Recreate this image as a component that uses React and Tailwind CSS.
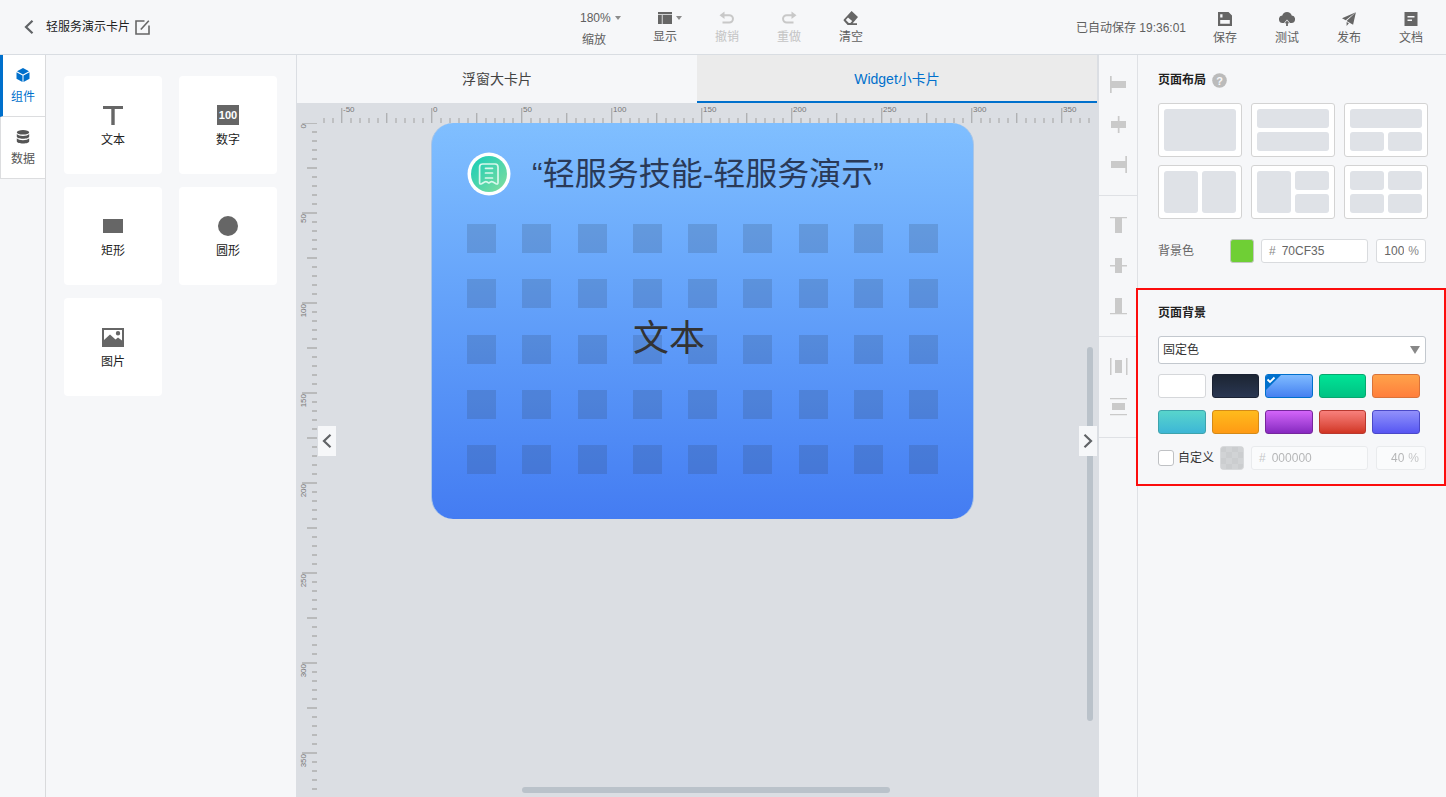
import React, { useEffect, useRef, useState } from "react";

const STEP = 9;

function useSize() {
  const ref = useRef(null);
  const [size, setSize] = useState({ width: 0, height: 0 });
  useEffect(() => {
    const update = () => {
      const r = ref.current.getBoundingClientRect();
      setSize({ width: r.width, height: r.height });
    };
    update();
    window.addEventListener("resize", update);
    return () => window.removeEventListener("resize", update);
  }, []);
  return [ref, size];
}

function TopRuler() {
  const [ref, { width }] = useSize();
  const origin = 134;
  const ticks = [];
  for (let i = -12; origin + i * STEP < width - 2; i++) {
    ticks.push(i);
  }
  return (
    <div ref={ref} className="h-5 w-full shrink-0">
      <svg className="block h-full w-full" aria-hidden="true">
        {ticks.map((i) => {
          const x = origin + i * STEP;
          const major = i % 10 === 0;
          const mid = i % 5 === 0;
          const h = major ? 15 : mid ? 10 : 5;
          return (
            <g key={i}>
              <rect x={x} y={20 - h} width={mid ? 1.4 : 2} height={h} fill={mid ? "#b0b1b3" : "#bfc0c2"} />
              {major && x < width - 20 && (
                <text x={x + 2} y="9" fontSize="8" fill="#777" fontFamily="Liberation Sans, Arial, sans-serif">
                  {i * 5}
                </text>
              )}
            </g>
          );
        })}
      </svg>
    </div>
  );
}

function SideRuler() {
  const [ref, { height }] = useSize();
  const ticks = [];
  for (let i = 0; i * STEP < height - 2; i++) {
    ticks.push(i);
  }
  return (
    <div ref={ref} className="w-5 shrink-0">
      <svg className="block h-full w-full" aria-hidden="true">
        {ticks.map((i) => {
          const y = i * STEP;
          const major = i % 10 === 0;
          const w = major ? 15 : i % 5 === 0 ? 10 : 5;
          return (
            <g key={i}>
              <rect x={20 - w} y={y - 1} width={w} height="2" fill="#b9babb" />
              {major && y < height - 16 && (
                <text
                  transform={`translate(9 ${y + 1}) rotate(-90)`}
                  textAnchor="end"
                  fontSize="8"
                  fill="#777"
                  fontFamily="Liberation Sans, Arial, sans-serif"
                >
                  {i * 5}
                </text>
              )}
            </g>
          );
        })}
      </svg>
    </div>
  );
}

function Chevron({ flip }) {
  return (
    <svg width="10" height="16" viewBox="0 0 10 16" fill="none" stroke="#606366" strokeWidth="2.2">
      {flip ? <path d="M1.5 1.8 8 8l-6.500 6.200" /> : <path d="M8.500 1.800 2 8l6.500 6.200" />}
    </svg>
  );
}

const Caret = () => (
  <svg width="6" height="4" viewBox="0 0 6 4" fill="#8c8c8c">
    <path d="M0 0h6L3 4z" />
  </svg>
);

const icons = {
  display: (
    <svg width="14" height="14" viewBox="0 0 14 14" fill="#666">
      <path d="M0 1h14v2.200H0zM0 4h3.800v9H0zM4.600 4H14v9H4.600z" />
    </svg>
  ),
  undo: (
    <svg width="16" height="14" viewBox="0 0 16 14">
      <path d="M4 4.200h6.300a3.600 3.600 0 0 1 0 7.300H3.500" fill="none" stroke="#c8c8c8" strokeWidth="2" />
      <path d="M0.500 4.200 5.500 0.500v7.400z" fill="#c8c8c8" />
    </svg>
  ),
  redo: (
    <svg width="16" height="14" viewBox="0 0 16 14">
      <path d="M12 4.200H5.700a3.600 3.600 0 0 0 0 7.300h6.800" fill="none" stroke="#c8c8c8" strokeWidth="2" />
      <path d="M15.500 4.200 10.500 0.500v7.400z" fill="#c8c8c8" />
    </svg>
  ),
  clear: (
    <svg width="16" height="16" viewBox="0 0 16 16" fill="#666">
      <path
        fillRule="evenodd"
        d="M8.600 1.100 15 7 9.700 13.200H14V15H4.600L.800 10.800a1 1 0 0 1 0-1.300zM5 7.400 2.800 10l3 3.100h1.600L9.200 11z"
      />
    </svg>
  ),
  save: (
    <svg width="14" height="14" viewBox="0 0 14 14" fill="#666">
      <path fillRule="evenodd" d="M0 0h10.500L14 3.500V14H0zM2.200 2.200v3.200h2.300V2.200zM2.200 8v3.800h9.600V8z" />
    </svg>
  ),
  test: (
    <svg width="16" height="14" viewBox="0 0 16 14" fill="#666">
      <path d="M8 0a5 5 0 0 1 4.700 3.600A3.700 3.700 0 0 1 12 11h-1L8 7.400 5 11H4a3.700 3.700 0 0 1-.700-7.400A5 5 0 0 1 8 0z" />
      <path d="M8 8.500 10.300 11.300H8.900V14H7.100v-2.700H5.700z" />
    </svg>
  ),
  publish: (
    <svg width="14" height="14" viewBox="0 0 14 14" fill="#666">
      <path d="M13.800.200 0 6.200l3.700 2zM13.900.300 4.600 9l6.500 3.700zM4.600 10V14l2.300-2.700z" />
    </svg>
  ),
  docs: (
    <svg width="14" height="14" viewBox="0 0 14 14" fill="#666">
      <path fillRule="evenodd" d="M.500 0h13v14H.500zM3.500 4v1.600h7V4zM3.500 7.500v1.600h4.500V7.500z" />
    </svg>
  ),
};

function Tool({ icon, label, disabled, caret }) {
  return (
    <button
      type="button"
      disabled={disabled}
      className={`relative flex w-[62px] flex-col items-center ${disabled ? "text-[#c4c4c4]" : "text-[#606060]"}`}
    >
      <span className="flex h-4 items-center">{icons[icon]}</span>
      <span className="mt-[3px] leading-4">{label}</span>
      {caret && (
        <span className="absolute top-1.5 right-3.5 flex h-1">
          <Caret />
        </span>
      )}
    </button>
  );
}

function Header() {
  return (
    <header className="grid h-[55px] shrink-0 grid-cols-[1fr_auto_1fr] items-center border-b border-[#d9dde2]">
      <div className="flex items-center pl-6">
        <button type="button" aria-label="返回">
          <Chevron />
        </button>
        <h1 className="ml-3 text-[12px] leading-4 text-[#222]">轻服务演示卡片</h1>
        <button type="button" aria-label="编辑名称" className="ml-[5px]">
          <svg width="15" height="15" viewBox="0 0 15 15" fill="none" stroke="#666" strokeWidth="1.600">
            <path d="M9.500 1H1v13h13V5.500M5.800 9.500l8-8.700" />
          </svg>
        </button>
      </div>
      <div className="flex items-start pt-[3px]">
        <button type="button" className="flex w-[70px] flex-col items-start pl-4 text-[#606060]">
          <span className="flex items-center gap-1 leading-4">
            180%
            <Caret />
          </span>
          <span className="mt-1.5 pl-0.5 leading-4">缩放</span>
        </button>
        <Tool icon="display" label="显示" caret />
        <Tool icon="undo" label="撤销" disabled />
        <Tool icon="redo" label="重做" disabled />
        <Tool icon="clear" label="清空" />
      </div>
      <div className="flex items-center justify-end pt-0.5 pr-1">
        <span className="mr-2 text-[#606060]">已自动保存 19:36:01</span>
        <Tool icon="save" label="保存" />
        <Tool icon="test" label="测试" />
        <Tool icon="publish" label="发布" />
        <Tool icon="docs" label="文档" />
      </div>
    </header>
  );
}

function Rail() {
  return (
    <nav className="w-[46px] shrink-0 border-r border-[#d9dadc]">
      <button
        type="button"
        className="flex h-[62px] w-full flex-col items-center border-b border-l-[3px] border-b-[#dcdddf] border-l-[#0070cc] bg-white pt-3 pr-0.5 text-[#0070cc]"
      >
        <svg width="14" height="16" viewBox="0 0 14 16" fill="#0070cc">
          <path d="M7 1 13 4.200 7 7.400 1 4.200zM.500 5.200l6 3.200V15l-6-3.300zM13.500 5.200l-6 3.200V15l6-3.300z" />
        </svg>
        <span className="mt-1.5 leading-4">组件</span>
      </button>
      <button
        type="button"
        className="flex h-[62px] w-full flex-col items-center border-b border-l border-[#dcdddf] bg-white pt-3 text-[#555]"
      >
        <svg width="14" height="16" viewBox="0 0 14 16" fill="#555">
          <ellipse cx="7" cy="3.300" rx="6.200" ry="2.300" />
          <path d="M.800 5c1 1.300 3.400 1.900 6.200 1.900s5.200-.600 6.200-1.900v2.500c0 1.300-2.800 2.300-6.200 2.300S.800 8.800.800 7.500zM.800 9.300c1 1.300 3.400 1.900 6.200 1.900s5.200-.600 6.200-1.900v2.900c0 1.300-2.800 2.300-6.200 2.300s-6.200-1-6.200-2.300z" />
        </svg>
        <span className="mt-1.5 leading-4">数据</span>
      </button>
    </nav>
  );
}

const parts = [
  {
    label: "文本",
    icon: <path d="M1 2h20v3H12.700v16H9.300V5H1z" />,
  },
  {
    label: "数字",
    icon: (
      <>
        <path d="M0 1h22v20H0z" />
        <text
          x="11"
          y="15"
          textAnchor="middle"
          fontSize="11"
          fontWeight="700"
          fill="#fff"
          fontFamily="Liberation Sans, sans-serif"
        >
          100
        </text>
      </>
    ),
  },
  { label: "矩形", icon: <path d="M1 4h20v14H1z" /> },
  { label: "圆形", icon: <circle cx="11" cy="11" r="10" /> },
  {
    label: "图片",
    icon: (
      <path
        fillRule="evenodd"
        d="M0 2h22v19H0zM2 4v10l6-5.500 5.500 5L16 11.500l4 3V4zM16 5a2.200 2.200 0 1 1 0 4.400A2.200 2.200 0 0 1 16 5z"
      />
    ),
  },
];

function Palette() {
  return (
    <section aria-label="组件" className="w-[251px] shrink-0 border-r border-[#dbdee3] pt-[21px] pr-[19px] pl-[18px]">
      <div className="grid grid-cols-2 gap-x-[17px] gap-y-[13px]">
        {parts.map((p) => (
          <button
            key={p.label}
            type="button"
            className="flex h-[98px] flex-col items-center justify-center rounded bg-white text-[#222]"
          >
            <svg width="22" height="22" viewBox="0 0 22 22" fill="#666" className="mt-0.5">
              {p.icon}
            </svg>
            <span className="mt-1.5 leading-4">{p.label}</span>
          </button>
        ))}
      </div>
    </section>
  );
}

function Card() {
  return (
    <article className="absolute top-0 left-[114px] h-[396px] w-[543px] rounded-[22px] border-x border-[#a9c5e6] bg-linear-to-b from-[#80bfff] to-[#447cf2] bg-origin-border">
      <div className="flex h-[101px] items-center pl-[35px]">
        <svg width="44" height="44" viewBox="0 0 44 44">
          <defs>
            <linearGradient id="badge" x1="0" y1="0" x2="1" y2="1">
              <stop offset=".1" stopColor="#1fceb6" />
              <stop offset=".9" stopColor="#79dca0" />
            </linearGradient>
          </defs>
          <circle cx="22" cy="22" r="21.500" fill="#fff" />
          <circle cx="22" cy="22" r="18" fill="url(#badge)" />
          <g fill="none" stroke="#d8f8ec" strokeWidth="1.700" strokeLinejoin="round" strokeLinecap="round">
            <path d="M15.500 12h12.500a3 3 0 0 1 3 3v15.500q0 2.200-2 1.200l-3-1.700q-1.300-.600-2.500 0l-1.700 1-1.700-1q-1.200-.600-2.500 0l-3 1.700q-2 1-2-1.200V15a3 3 0 0 1 3-3zM18.500 16.300h7M18.500 21h7M18.500 26h7" />
          </g>
        </svg>
        <h2 className="ml-[21px] text-[32px] leading-10 whitespace-nowrap text-[#2a3a58]">“轻服务技能-轻服务演示”</h2>
      </div>
      <div className="ml-[35px] grid h-[250px] w-[471px] grid-cols-[repeat(9,29px)] content-between justify-between">
        {Array.from({ length: 45 }, (_, i) => (
          <span key={i} className="h-[29px] bg-[#334466]/20" />
        ))}
      </div>
      <p className="absolute top-[192px] left-[201px] text-[36px] leading-[48px] text-[#333]">文本</p>
    </article>
  );
}

function Workspace() {
  return (
    <main className="relative flex min-w-0 flex-1 flex-col border-r-2 border-[#dbdee3] bg-[#dbdee3]">
      <div role="tablist" className="flex h-12 shrink-0 text-[14px]">
        <button type="button" role="tab" aria-selected="false" className="flex-1 bg-[#f6f7f9] text-[#444]">
          浮窗大卡片
        </button>
        <button
          type="button"
          role="tab"
          aria-selected="true"
          className="flex-1 border-b-2 border-[#0070cc] bg-[#ebebeb] pt-0.5 text-[#0070cc]"
        >
          Widget小卡片
        </button>
      </div>
      <TopRuler />
      <div className="flex min-h-0 flex-1">
        <SideRuler />
        <div className="relative min-w-0 flex-1 overflow-hidden">
          <Card />
          <div className="absolute top-[224px] right-1 h-[374px] w-1.5 rounded-full bg-[#bac2ca]" />
          <div className="absolute bottom-1 left-[205px] h-1.5 w-[368px] rounded-full bg-[#bac2ca]" />
        </div>
      </div>
      <button
        type="button"
        aria-label="收起左侧"
        className="absolute top-1/2 left-[21px] flex h-[30px] w-[18px] items-center justify-center bg-[#f6f7f9]"
      >
        <Chevron />
      </button>
      <button
        type="button"
        aria-label="收起右侧"
        className="absolute top-1/2 right-0 flex h-[30px] w-[18px] items-center justify-center bg-[#f6f7f9]"
      >
        <Chevron flip />
      </button>
    </main>
  );
}

const alignGroups = [
  [
    ["左对齐", "M1 1h1.700v17H1zM2.700 6H17v7H2.700z"],
    ["水平居中", "M2 6h15v7H2zM8.800 1h1.700v5H8.800zM8.800 13h1.700v5H8.800z"],
    ["右对齐", "M2 6h14.300v7H2zM16.300 1H18v17h-1.700z"],
  ],
  [
    ["顶对齐", "M1 1h17v1.200H1zM6 2.200h7V17H6z"],
    ["垂直居中", "M6 2h7v15H6zM1 9h5v1.400H1zM13 9h5v1.400h-5z"],
    ["底对齐", "M1 17h17v1.200H1zM6 2h7v15H6z"],
  ],
  [
    ["水平分布", "M1 1h1.500v17H1zM17 1h1.500v17H17zM6 3h7v13H6z"],
    ["垂直分布", "M1 1h17v1.200H1zM1 17h17v1.200H1zM3 6h13v7H3z"],
  ],
];

function AlignBar() {
  return (
    <div role="toolbar" aria-label="对齐" className="w-[39px] shrink-0 border-r border-[#dfe1e5]">
      {alignGroups.map((group) => (
        <div
          key={group[0][0]}
          className="flex flex-col items-center gap-[21px] border-b border-[#dfe1e5] pt-5 pb-[21px]"
        >
          {group.map(([label, d]) => (
            <button key={label} type="button" aria-label={label}>
              <svg width="19" height="19" viewBox="0 0 19 19" fill="#cacaca" className="block">
                <path d={d} />
              </svg>
            </button>
          ))}
        </div>
      ))}
    </div>
  );
}

const layouts = [
  { name: "单格", tiles: ["col-span-2 row-span-2"] },
  { name: "上下两格", tiles: ["col-span-2", "col-span-2"] },
  { name: "上一下二", tiles: ["col-span-2", "", ""] },
  { name: "左右两格", tiles: ["row-span-2", "row-span-2"] },
  { name: "左一右二", tiles: ["row-span-2", "", ""] },
  { name: "四格", tiles: ["", "", "", ""] },
];

const swatches = [
  ["白色", "border-[#d5d7da] bg-white"],
  ["深蓝", "border-[#1a2233] from-[#1c2533] to-[#2a3752]"],
  ["蓝色", "border-[#0070cc] from-[#80bbff] to-[#4680f0]"],
  ["绿色", "border-[#06a86f] from-[#00e496] to-[#00c283]"],
  ["橙色", "border-[#d9733a] from-[#ffa24a] to-[#ff7e3c]"],
  ["青色", "border-[#3ea3ac] from-[#58d5cc] to-[#3db6d6]"],
  ["黄色", "border-[#d48a18] from-[#ffbb1c] to-[#ff9a14]"],
  ["紫色", "border-[#76279c] from-[#d465fa] to-[#8728c0]"],
  ["红色", "border-[#b8382f] from-[#f8807c] to-[#d13422]"],
  ["靛蓝", "border-[#4a49c8] from-[#9290fa] to-[#5855f2]"],
];

function ColorField({ label, value, opacity, disabled }) {
  const box = "flex h-6 items-center rounded-[3px] border bg-white";
  return (
    <>
      <label className={`${box} ml-[7px] min-w-0 flex-1 border-[#d9dbde] pl-[7px]`}>
        <span className="text-[#888]">#</span>
        <input
          aria-label={`${label}色值`}
          defaultValue={value}
          disabled={disabled}
          className="ml-1.5 w-full min-w-0 bg-transparent text-[#666] outline-none"
        />
      </label>
      <label className={`${box} ml-2 w-[50px] shrink-0 border-[#d9dbde] pr-1.5`}>
        <input
          aria-label={`${label}不透明度`}
          defaultValue={opacity}
          disabled={disabled}
          className="w-full min-w-0 bg-transparent text-right text-[#666] outline-none"
        />
        <span className="ml-1 text-[#888]">%</span>
      </label>
    </>
  );
}

function Inspector() {
  return (
    <aside className="w-[308px] shrink-0">
      <section className="h-[233px] pr-[18px] pl-5">
        <div className="flex items-center gap-1.5 pt-[17px]">
          <h2 className="leading-4 font-bold text-[#222]">页面布局</h2>
          <svg width="15" height="15" viewBox="0 0 15 15" role="img" aria-label="帮助">
            <circle cx="7.500" cy="7.500" r="7.300" fill="#bbb" />
            <text
              x="7.500"
              y="11.500"
              textAnchor="middle"
              fontSize="11"
              fontWeight="700"
              fill="#f6f7f9"
              fontFamily="Liberation Sans, sans-serif"
            >
              ?
            </text>
          </svg>
        </div>
        <div className="mt-[15px] grid grid-cols-3 gap-x-[9px] gap-y-2">
          {layouts.map((l) => (
            <button
              key={l.name}
              type="button"
              aria-label={l.name}
              className="grid h-[54px] grid-cols-2 grid-rows-2 gap-1 rounded-[3px] border border-[#d3d3d3] bg-white p-[5px]"
            >
              {l.tiles.map((t, i) => (
                <span key={i} className={`h-full rounded-[3px] bg-[#dfe2e7] ${t}`} />
              ))}
            </button>
          ))}
        </div>
        <div className="mt-5 flex items-center pr-0.5">
          <span className="w-[72px] shrink-0 text-[#666]">背景色</span>
          <button
            type="button"
            aria-label="选择背景色"
            className="size-6 shrink-0 rounded-[3px] border border-[#c3c7c3] bg-[#6fcf35]"
          />
          <ColorField label="背景色" value="70CF35" opacity="100" />
        </div>
      </section>
      <section className="relative h-[198px] pr-5 pl-5">
        <div className="pointer-events-none absolute inset-y-0 right-0 -left-0.5 border-2 border-[#fc0d0d]" />
        <h2 className="pt-[17px] leading-4 font-bold text-[#222]">页面背景</h2>
        <div className="relative mt-[15px]">
          <select
            aria-label="页面背景"
            className="block h-7 w-full appearance-none rounded-[3px] border border-[#c3c8ce] bg-white px-1 text-[#333]"
          >
            <option>固定色</option>
          </select>
          <svg
            width="10"
            height="8"
            viewBox="0 0 10 8"
            fill="#888"
            className="pointer-events-none absolute top-2.5 right-1.5"
          >
            <path d="M0 0h10L5 8z" />
          </svg>
        </div>
        <div className="mt-2.5 grid grid-cols-5 gap-x-1.5 gap-y-3 pr-1.5">
          {swatches.map(([name, cls]) => (
            <button
              key={name}
              type="button"
              aria-label={name}
              className={`relative h-6 overflow-hidden rounded-[3px] border bg-linear-to-b ${cls}`}
            >
              {name === "蓝色" && (
                <svg width="15" height="15" viewBox="0 0 15 15" className="absolute top-0 left-0">
                  <path d="M0 0h15L0 15z" fill="#0070cc" />
                  <path d="m1.500 4.500 2.500 2.500L8.500 2.500" fill="none" stroke="#fff" strokeWidth="1.800" />
                </svg>
              )}
            </button>
          ))}
        </div>
        <div className="mt-3 flex items-center">
          <label className="flex w-[62px] shrink-0 items-center gap-1 text-[#333]">
            <input type="checkbox" className="size-4 appearance-none rounded-[3px] border border-[#bfc1c4] bg-white" />
            自定义
          </label>
          <div className="flex min-w-0 flex-1 items-center opacity-45">
            <svg width="24" height="24" viewBox="0 0 24 24" role="img" aria-label="自定义颜色" className="shrink-0">
              <rect x=".5" y=".5" width="23" height="23" rx="3" fill="#97989a" stroke="#b4b5b7" />
              <path
                d="M6 1h6v5H6zM18 1h5v5h-5zM1 6h5v6H1zM12 6h6v6h-6zM6 12h6v6H6zM18 12h5v6h-5zM1 18h5v5H1zM12 18h6v5h-6z"
                fill="#a4a5a7"
              />
            </svg>
            <ColorField label="自定义" value="000000" opacity="40" disabled />
          </div>
        </div>
      </section>
    </aside>
  );
}

export default function App() {
  return (
    <div className="flex h-screen flex-col overflow-hidden bg-[#f6f7f9] font-['Liberation_Sans','Noto_Sans_CJK_SC',sans-serif] text-[12px]">
      <Header />
      <div className="flex min-h-0 flex-1">
        <Rail />
        <Palette />
        <Workspace />
        <AlignBar />
        <Inspector />
      </div>
    </div>
  );
}
